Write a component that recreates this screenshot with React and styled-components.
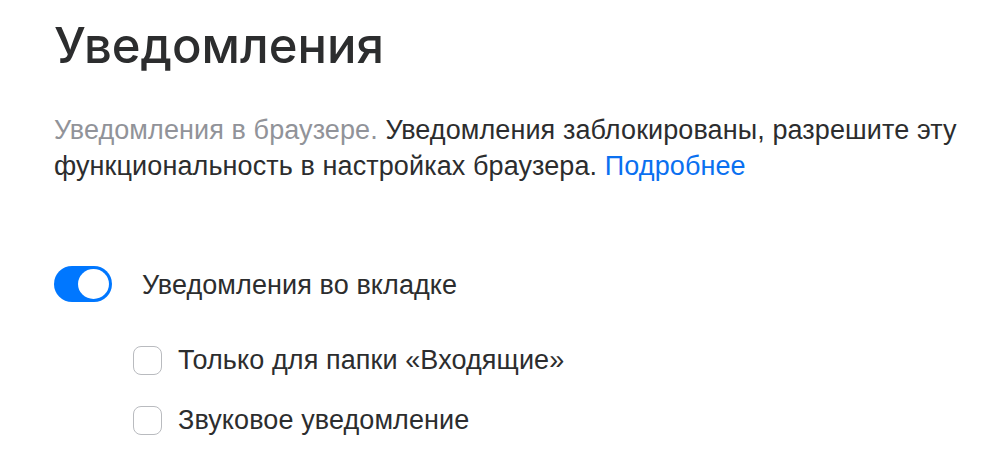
import styled, { createGlobalStyle } from "styled-components";

const Global = createGlobalStyle`
  body {
    margin: 0;
    background: #fff;
    font-family: "Liberation Sans", Arial, sans-serif;
    color: #2c2d2e;
  }
`;

function App() {
  return (
    <>
      <Global />
      <Page>
        <Title>Уведомления</Title>
        <Text>
          <Muted>Уведомления в браузере.</Muted> Уведомления заблокированы,
          разрешите эту функциональность в настройках браузера.{" "}
          <MoreLink href="#">Подробнее</MoreLink>
        </Text>

        <ToggleRow>
          <Toggle checked />
          <ToggleLabel>Уведомления во вкладке</ToggleLabel>
        </ToggleRow>

        <Options>
          <CheckRow>
            <Box />
            <span>Только для папки «Входящие»</span>
          </CheckRow>
          <CheckRow>
            <Box />
            <span>Звуковое уведомление</span>
          </CheckRow>
        </Options>
      </Page>
    </>
  );
}

const Page = styled.div`
  padding: 18px 30px 0 54px;
  width: 915px;
  letter-spacing: 0.1px;
`;

const Title = styled.h1`
  margin: 0;
  font-family: Inter, "Noto Sans", sans-serif;
  font-size: 49px;
  font-weight: 500;
  line-height: 56px;
  letter-spacing: 0;
  color: #2c2d2e;
`;

const Text = styled.p`
  margin: 38px 0 0;
  font-size: 27px;
  line-height: 36px;
  color: #2c2d2e;
`;

const Muted = styled.span`
  color: #919399;
`;

const MoreLink = styled.a`
  color: #0a70f0;
  text-decoration: none;
`;

const ToggleRow = styled.div`
  display: flex;
  align-items: center;
  gap: 30px;
  margin-top: 82px;
`;

const Toggle = styled.span`
  position: relative;
  width: 58px;
  height: 36px;
  border-radius: 18px;
  background: ${(p) => (p.checked ? "#0077ff" : "#c6c7c9")};
  flex-shrink: 0;

  &::after {
    content: "";
    position: absolute;
    top: 3px;
    left: ${(p) => (p.checked ? "24px" : "3px")};
    width: 31px;
    height: 30px;
    border-radius: 50%;
    background: #fff;
  }
`;

const ToggleLabel = styled.span`
  font-size: 27px;
  padding-top: 3px;
`;

const Options = styled.div`
  display: flex;
  flex-direction: column;
  gap: 29px;
  margin: 43px 0 0 79px;
`;

const CheckRow = styled.label`
  display: flex;
  align-items: center;
  gap: 16px;
  font-size: 27px;
`;

const Box = styled.span`
  width: 27px;
  height: 27px;
  border: 1px solid #b9bbbf;
  border-radius: 8px;
  flex-shrink: 0;
`;

export default App;
